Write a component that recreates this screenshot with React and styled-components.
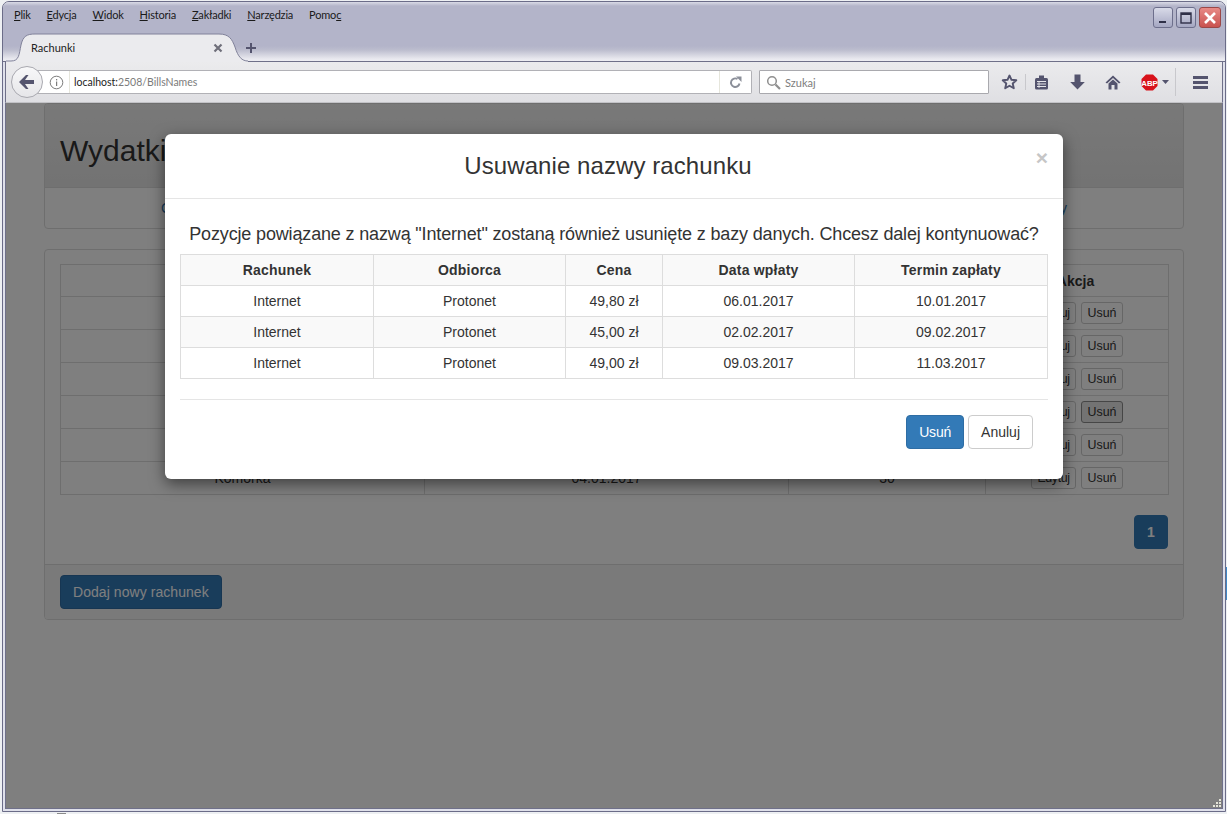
import React from "react";
import styled, { createGlobalStyle } from "styled-components";

const Global = createGlobalStyle`
  html, body { margin: 0; padding: 0; background: #eef0f3; }
  body { font-family: "Liberation Sans", Arial, sans-serif; overflow: hidden; }
  * { box-sizing: border-box; }
`;

const Desktop = styled.div`
  position: relative;
  width: 1227px;
  height: 814px;
  overflow: hidden;
  padding: 1px 1px 0 2px;
`;
const DesktopMark = styled.div`
  position: absolute;
  right: 0;
  top: 567px;
  width: 1px;
  height: 33px;
  background: #3f87c6;
`;
const BottomMark = styled.div`
  position: absolute;
  left: 57px;
  bottom: 0;
  width: 9px;
  height: 1px;
  background: #8a8a8a;
`;
const Win = styled.div`
  width: 1224px;
  height: 811px;
  border: 1px solid #6b6c88;
  border-radius: 7px 7px 0 0;
  background: #dfe0ea;
  padding: 0 2px 2px;
  display: flex;
  flex-direction: column;
`;
const TitleBar = styled.div`
  height: 60px;
  margin: 0 -2px;
  padding: 0 2px;
  flex: none;
  border-bottom: 1px solid #6f7089;
  border-radius: 6px 6px 0 0;
  background: linear-gradient(#d9dae6 0, #b3b4c9 4px, #b3b4c9 44px, #bcbdce 48px, #e9e9ef 57px, #f0f0f4 60px);
  display: flex;
  flex-direction: column;
`;
const MenuRow = styled.div`
  height: 31px;
  flex: none;
  display: flex;
  align-items: flex-start;
  padding: 5px 2px 0 9px;
  gap: 16px;
`;
const MenuItem = styled.span`
  font: 11px/15px Lato, sans-serif;
  letter-spacing: -0.2px;
  color: #1a1a1a;
  & u { text-underline-offset: 1px; }
`;
const WinControls = styled.div`
  margin-left: auto;
  display: flex;
  gap: 3px;
`;
const WinBtn = styled.div`
  width: ${(p) => p.$w || 20}px;
  height: 21px;
  border: 1px solid ${(p) => (p.$close ? "#9a4848" : "#6d6f8c")};
  border-radius: 3px;
  background: ${(p) => (p.$close ? "linear-gradient(#e88a86,#c9524f)" : "linear-gradient(#d8dae8,#a5a7c2)")};
  display: flex;
  align-items: center;
  justify-content: center;
  & svg { display: block; }
`;
const TabRow = styled.div`
  height: 28px;
  flex: none;
  display: flex;
  align-items: flex-start;
`;
const Tab = styled.div`
  position: relative;
  width: 242px;
  height: 29px;
  margin-left: 1px;
  padding: 0 0 0 25px;
  display: flex;
  align-items: center;
  z-index: 1;
  flex: none;
  & > svg.shape { position: absolute; left: 0; top: 0; }
`;
const TabTitle = styled.span`
  position: relative;
  font: 11px/15px Lato, sans-serif;
  color: #222;
`;
const TabClose = styled.span`
  position: absolute;
  left: 207px;
  top: 10px;
  display: flex;
`;
const NewTab = styled.span`
  position: relative;
  z-index: 2;
  margin: 9px 0 0 -3px;
  display: flex;
`;
const Nav = styled.div`
  height: 41px;
  flex: none;
  border-left: 1px solid #6f7089;
  border-right: 1px solid #6f7089;
  border-bottom: 1px solid #c2c2c6;
  background: linear-gradient(#ebebed, #dfdfe3);
  display: flex;
  align-items: center;
  position: relative;
`;
const BackBtn = styled.div`
  position: relative;
  z-index: 1;
  width: 32px;
  height: 32px;
  margin: 0 0 0 5px;
  border-radius: 50%;
  border: 1px solid #a9a9b0;
  background: linear-gradient(#f8f8f9, #e6e6e9);
  display: flex;
  align-items: center;
  justify-content: center;
  flex: none;
`;
const UrlBar = styled.div`
  width: 721px;
  height: 24px;
  margin: 0 0 0 -12px;
  padding: 0 0 0 18px;
  background: #fff;
  border: 1px solid #b1b1b6;
  border-left: none;
  border-radius: 0 2px 2px 0;
  display: flex;
  align-items: center;
  flex: none;
`;
const InfoBox = styled.div`
  display: flex;
  padding-right: 5px;
  margin-right: 4px;
  border-right: 1px solid #e6e6dc;
  height: 22px;
  align-items: center;
`;
const UrlText = styled.span`
  font: 10.5px/15px Lato, sans-serif;
  color: #1c1c1c;
  & b { font-weight: 400; color: #7b7b7b; }
`;
const ReloadBox = styled.div`
  margin-left: auto;
  width: 32px;
  height: 22px;
  border-left: 1px solid #e6e6dc;
  display: flex;
  align-items: center;
  justify-content: center;
`;
const SearchBar = styled.div`
  width: 230px;
  height: 24px;
  margin-left: 7px;
  background: #fff;
  border: 1px solid #a9a9ae;
  border-radius: 1px;
  display: flex;
  align-items: center;
  padding-left: 6px;
  gap: 4px;
  flex: none;
`;
const SearchText = styled.span`
  font: 11px/15px Lato, sans-serif;
  color: #7d7d7d;
`;
const ToolBtn = styled.div`
  width: ${(p) => p.$w}px;
  height: 28px;
  flex: none;
  display: flex;
  align-items: center;
  justify-content: center;
  gap: 4px;
  margin-left: ${(p) => p.$ml || 0}px;
  padding-left: ${(p) => p.$pl || 0}px;
`;
const ToolSep = styled.div`
  width: 1px;
  height: ${(p) => p.$h || 16}px;
  background: #c8c8cc;
  flex: none;
`;
const Viewport = styled.div`
  position: relative;
  flex: 1;
  min-height: 0;
  border: 1px solid #6f7089;
  border-top: none;
  background: #fff;
  padding: 0 38px;
  overflow: hidden;
`;
const Panel = styled.div`
  border: 1px solid #ddd;
  border-radius: 4px;
  background: #fff;
  margin-bottom: 20px;
`;
const Jumbo = styled.div`
  height: 84px;
  background: linear-gradient(#f2f2f2, #e6e6e6);
  border-bottom: 1px solid #ddd;
  padding: 29px 15px 0;
  border-radius: 3px 3px 0 0;
`;
const PageTitle = styled.h1`
  margin: 0;
  font: 400 30px/36px "Liberation Sans", sans-serif;
  color: #333;
`;
const PageNav = styled.div`
  height: 40px;
  display: flex;
  align-items: center;
  justify-content: space-between;
  padding: 0 116px;
`;
const PageLink = styled.a`
  font-size: 14px;
  color: #337ab7;
`;
const PanelBody = styled.div`
  padding: 14px 15px 15px;
`;
const BillTable = styled.table`
  width: 1108px;
  table-layout: fixed;
  border-collapse: collapse;
  font-size: 14px;
  color: #333;
  & th, & td {
    border: 1px solid #ddd;
    text-align: center;
    padding: 5px;
    height: 33px;
  }
  & th { height: 32px; }
  & th:nth-child(4) { padding-right: 8px; }
`;
const SmallBtn = styled.span`
  display: inline-block;
  font-size: 12.4px;
  line-height: 18px;
  letter-spacing: ${(p) => p.$track || 0}px;
  height: 22px;
  padding: 1px 5.5px;
  border-radius: 3px;
  border: 1px solid ${(p) => (p.$focus ? "#8c8c8c" : "#ccc")};
  background: ${(p) => (p.$focus ? "#e6e6e6" : "#fff")};
  color: #333;
  margin: 0 2.5px;
`;
const Pager = styled.div`
  display: flex;
  justify-content: flex-end;
  margin-top: 20px;
`;
const PageBtn = styled.span`
  width: 34px;
  height: 34px;
  border-radius: 4px;
  background: #337ab7;
  border: 1px solid #337ab7;
  color: #fff;
  font-size: 14px;
  font-weight: 700;
  display: flex;
  align-items: center;
  justify-content: center;
`;
const PanelFooter = styled.div`
  border-top: 1px solid #ddd;
  background: #f5f5f5;
  padding: 10px 15px;
  border-radius: 0 0 3px 3px;
`;
const Btn = styled.span`
  display: inline-block;
  height: 34px;
  padding: 6px 12px;
  font-size: 14px;
  line-height: 20px;
  letter-spacing: ${(p) => p.$track || 0}px;
  border-radius: 4px;
  border: 1px solid ${(p) => (p.$primary ? "#2e6da4" : "#ccc")};
  background: ${(p) => (p.$primary ? "#337ab7" : "#fff")};
  color: ${(p) => (p.$primary ? "#fff" : "#333")};
`;
const Overlay = styled.div`
  position: absolute;
  inset: 0;
  background: rgba(0, 0, 0, 0.5);
  display: flex;
  justify-content: center;
  align-items: flex-start;
  padding-top: 31px;
`;
const Modal = styled.div`
  width: 898px;
  height: 345px;
  background: #fff;
  border-radius: 6px;
  box-shadow: 0 5px 15px rgba(0, 0, 0, 0.5);
  display: flex;
  flex-direction: column;
  position: relative;
`;
const ModalHead = styled.div`
  height: 65px;
  flex: none;
  border-bottom: 1px solid #e5e5e5;
  display: flex;
  align-items: center;
  justify-content: center;
  padding: 0 12px 1px 0;
`;
const ModalTitle = styled.h4`
  margin: 0;
  font: 400 24px/34px "Liberation Sans", sans-serif;
  letter-spacing: 0.08px;
  color: #333;
`;
const CloseX = styled.span`
  position: absolute;
  right: 15px;
  top: 13px;
  font: 700 21px/21px "Liberation Sans", sans-serif;
  color: #c6c6c6;
`;
const ModalBody = styled.div`
  padding: 25px 15px 15px;
`;
const Lead = styled.p`
  margin: 0 0 9px;
  font-size: 18px;
  line-height: 21px;
  letter-spacing: -0.155px;
  color: #333;
  text-align: center;
`;
const DetailTable = styled.table`
  width: 867px;
  table-layout: fixed;
  border-collapse: collapse;
  font-size: 14px;
  color: #333;
  & th, & td {
    border: 1px solid #ddd;
    text-align: center;
    padding: 5px;
    height: 31px;
  }
  & th { letter-spacing: 0.2px; }
  & thead tr, & tbody tr:nth-child(2) { background: #f9f9f9; }
`;
const ModalFoot = styled.div`
  margin-top: 20px;
  border-top: 1px solid #e5e5e5;
  padding: 15px;
  display: flex;
  justify-content: flex-end;
  gap: 4px;
`;
const Grip = styled.svg`
  position: absolute;
  right: 0;
  bottom: 0;
  display: block;
`;

const bills = [
  ["Prąd", "05.01.2017", "120"],
  ["Gaz", "07.01.2017", "85"],
  ["Internet", "10.01.2017", "50"],
  ["Czynsz", "10.01.2017", "600"],
  ["Woda", "15.01.2017", "40"],
  ["Komórka", "04.01.2017", "30"],
];
const details = [
  ["Internet", "Protonet", "49,80 zł", "06.01.2017", "10.01.2017"],
  ["Internet", "Protonet", "45,00 zł", "02.02.2017", "09.02.2017"],
  ["Internet", "Protonet", "49,00 zł", "09.03.2017", "11.03.2017"],
];
const menu = [
  [<u key="u">P</u>, "lik"],
  [<u key="u">E</u>, "dycja"],
  [<u key="u">W</u>, "idok"],
  [<u key="u">H</u>, "istoria"],
  [<u key="u">Z</u>, "akładki"],
  [<u key="u">N</u>, "arzędzia"],
  ["Pomo", <u key="u">c</u>],
];
const ink = "#54546e";

export default function App() {
  return (
    <Desktop>
      <Global />
      <Win>
        <TitleBar>
          <MenuRow>
            {menu.map((m, i) => (
              <MenuItem key={i}>{m}</MenuItem>
            ))}
            <WinControls>
              <WinBtn>
                <svg width="10" height="12"><rect x="1" y="9" width="7" height="2" fill="#2f3048" /></svg>
              </WinBtn>
              <WinBtn>
                <svg width="12" height="12"><rect x="1" y="1" width="10" height="10" fill="none" stroke="#2f3048" strokeWidth="1.4" /><rect x="1" y="1" width="10" height="2" fill="#2f3048" /></svg>
              </WinBtn>
              <WinBtn $close $w={22}>
                <svg width="14" height="14"><path d="M2 2 L12 12 M12 2 L2 12" stroke="#fff" strokeWidth="2.6" /></svg>
              </WinBtn>
            </WinControls>
          </MenuRow>
          <TabRow>
            <Tab>
              <svg className="shape" width="242" height="29">
                <path d="M0 28 L5 28 C13 28 13 22 15 12 C17 3 21 1 29 1 L213 1 C223 1 226 6 229 14 C232 24 236 28 242 28 L242 29 L0 29 Z" fill="#ebebee" />
                <path d="M0 28 L5 28 C13 28 13 22 15 12 C17 3 21 1 29 1 L213 1 C223 1 226 6 229 14 C232 24 236 28 242 28" fill="none" stroke="#81829a" />
              </svg>
              <TabTitle>Rachunki</TabTitle>
              <TabClose>
                <svg width="10" height="10"><path d="M1.5 1.5 L8.5 8.5 M8.5 1.5 L1.5 8.5" stroke="#6f6f7a" strokeWidth="2.2" /></svg>
              </TabClose>
            </Tab>
            <NewTab>
              <svg width="12" height="12"><path d="M6 1 V11 M1 6 H11" stroke={ink} strokeWidth="2" /></svg>
            </NewTab>
          </TabRow>
        </TitleBar>
        <Nav>
          <BackBtn>
            <svg width="18" height="16" viewBox="0 0 18 16"><path d="M8 1 L1 8 L8 15 L10.500 15 L7 10 H16 V6 H7 L10.500 1 Z" fill={ink} /></svg>
          </BackBtn>
          <UrlBar>
            <InfoBox>
              <svg width="15" height="15" viewBox="0 0 15 15"><circle cx="7.500" cy="7.500" r="6.300" fill="none" stroke="#7c7c7c" /><rect x="7" y="6.500" width="1.200" height="4.500" fill="#7c7c7c" /><rect x="7" y="4" width="1.200" height="1.400" fill="#7c7c7c" /></svg>
            </InfoBox>
            <UrlText>localhost:<b>2508/BillsNames</b></UrlText>
            <ReloadBox>
              <svg width="13" height="13" viewBox="0 0 13 13"><path d="M10.500 7.500 A4.300 4.300 0 1 1 8.500 3" fill="none" stroke="#8b8f99" strokeWidth="1.900" /><path d="M7 0.500 L12.500 0.500 L12.500 6 Z" fill="#8b8f99" /></svg>
            </ReloadBox>
          </UrlBar>
          <SearchBar>
            <svg width="15" height="15" viewBox="0 0 15 15"><circle cx="6" cy="6" r="4.300" fill="none" stroke="#8f8f8f" strokeWidth="1.500" /><path d="M9.500 9.500 L14 14" stroke="#8f8f8f" strokeWidth="2.200" /></svg>
            <SearchText>Szukaj</SearchText>
          </SearchBar>
          <ToolBtn $w={32} $ml={4}>
            <svg width="17" height="16" viewBox="0 0 17 16"><path d="M8.500 1.500 L10.500 5.800 L15.300 6.300 L11.700 9.500 L12.800 14.300 L8.500 11.800 L4.200 14.300 L5.300 9.500 L1.700 6.300 L6.500 5.800 Z" fill="none" stroke={ink} strokeWidth="1.900" strokeLinejoin="round" /></svg>
          </ToolBtn>
          <ToolSep />
          <ToolBtn $w={30}>
            <svg width="15" height="15" viewBox="0 0 15 15"><rect x="1" y="3" width="13" height="11.500" rx="1.500" fill={ink} /><rect x="5" y="0.500" width="5" height="3" fill={ink} /><path d="M3 6.500 H12 M3 9 H12 M3 11.500 H12" stroke="#e6e6ea" strokeWidth="1.100" /><path d="M5 6 V13" stroke="#e6e6ea" strokeWidth="0.800" /></svg>
          </ToolBtn>
          <ToolBtn $w={42}>
            <svg width="15" height="16" viewBox="0 0 15 16"><path d="M4.500 0.500 H10.500 V8 H14.800 L7.500 15.500 L0.200 8 H4.500 Z" fill={ink} /></svg>
          </ToolBtn>
          <ToolBtn $w={30}>
            <svg width="16" height="15" viewBox="0 0 16 15"><path d="M8 0.500 L15.500 7.500 L14 8.500 L8 3 L2 8.500 L0.500 7.500 Z" fill={ink} /><path d="M3.500 8.500 L8 4.500 L12.500 8.500 V14.500 H9.500 V10 H6.500 V14.500 H3.500 Z" fill={ink} /></svg>
          </ToolBtn>
          <ToolBtn $w={47} $pl={6}>
            <svg width="17" height="17" viewBox="0 0 17 17"><path d="M5 0.500 H12 L16.500 5 V12 L12 16.500 H5 L0.500 12 V5 Z" fill="#d8121b" /><text x="8.500" y="11.500" fontFamily="Liberation Sans" fontWeight="700" fontSize="7.800" fill="#fff" textAnchor="middle">ABP</text></svg>
            <svg width="7" height="4" viewBox="0 0 7 4"><path d="M0 0 H7 L3.500 4 Z" fill={ink} /></svg>
          </ToolBtn>
          <ToolSep $h={28} />
          <ToolBtn $w={46} $pl={2}>
            <svg width="15" height="13" viewBox="0 0 15 13"><path d="M0 0 H15 V3 H0 Z M0 5 H15 V8 H0 Z M0 10 H15 V13 H0 Z" fill={ink} /></svg>
          </ToolBtn>
        </Nav>
        <Viewport>
          <Panel>
            <Jumbo>
              <PageTitle>Wydatki</PageTitle>
            </Jumbo>
            <PageNav>
              <PageLink>Cele</PageLink>
              <PageLink>Raporty</PageLink>
            </PageNav>
          </Panel>
          <Panel>
            <PanelBody>
              <BillTable>
                <colgroup>
                  <col width="364" />
                  <col width="364" />
                  <col width="197" />
                  <col width="183" />
                </colgroup>
                <thead>
                  <tr>
                    <th>Nazwa</th>
                    <th>Termin</th>
                    <th>Kwota</th>
                    <th>Akcja</th>
                  </tr>
                </thead>
                <tbody>
                  {bills.map((b, i) => (
                    <tr key={b[0]}>
                      <td>{b[0]}</td>
                      <td>{b[1]}</td>
                      <td>{b[2]}</td>
                      <td>
                        <SmallBtn $track={-0.4}>Edytuj</SmallBtn>
                        <SmallBtn $focus={i === 3}>Usuń</SmallBtn>
                      </td>
                    </tr>
                  ))}
                </tbody>
              </BillTable>
              <Pager>
                <PageBtn>1</PageBtn>
              </Pager>
            </PanelBody>
            <PanelFooter>
              <Btn $primary $track={0.06}>Dodaj nowy rachunek</Btn>
            </PanelFooter>
          </Panel>
          <Overlay>
            <Modal>
              <ModalHead>
                <ModalTitle>Usuwanie nazwy rachunku</ModalTitle>
              </ModalHead>
              <CloseX>×</CloseX>
              <ModalBody>
                <Lead>Pozycje powiązane z nazwą "Internet" zostaną również usunięte z bazy danych. Chcesz dalej kontynuować?</Lead>
                <DetailTable>
                  <colgroup>
                    <col width="193" />
                    <col width="192" />
                    <col width="97" />
                    <col width="192" />
                    <col width="193" />
                  </colgroup>
                  <thead>
                    <tr>
                      <th>Rachunek</th>
                      <th>Odbiorca</th>
                      <th>Cena</th>
                      <th>Data wpłaty</th>
                      <th>Termin zapłaty</th>
                    </tr>
                  </thead>
                  <tbody>
                    {details.map((d) => (
                      <tr key={d[3]}>
                        {d.map((c, i) => (
                          <td key={i}>{c}</td>
                        ))}
                      </tr>
                    ))}
                  </tbody>
                </DetailTable>
                <ModalFoot>
                  <Btn $primary $track={-0.2}>Usuń</Btn>
                  <Btn>Anuluj</Btn>
                </ModalFoot>
              </ModalBody>
            </Modal>
          </Overlay>
          <Grip width="11" height="11" viewBox="0 0 11 11">
            <path d="M8 0h2v2H8z M5 3h2v2H5z M8 3h2v2H8z M2 6h2v2H2z M5 6h2v2H5z M8 6h2v2H8z" fill="#e4e4d8" transform="translate(0 2)" />
          </Grip>
        </Viewport>
      </Win>
      <DesktopMark />
      <BottomMark />
    </Desktop>
  );
}
